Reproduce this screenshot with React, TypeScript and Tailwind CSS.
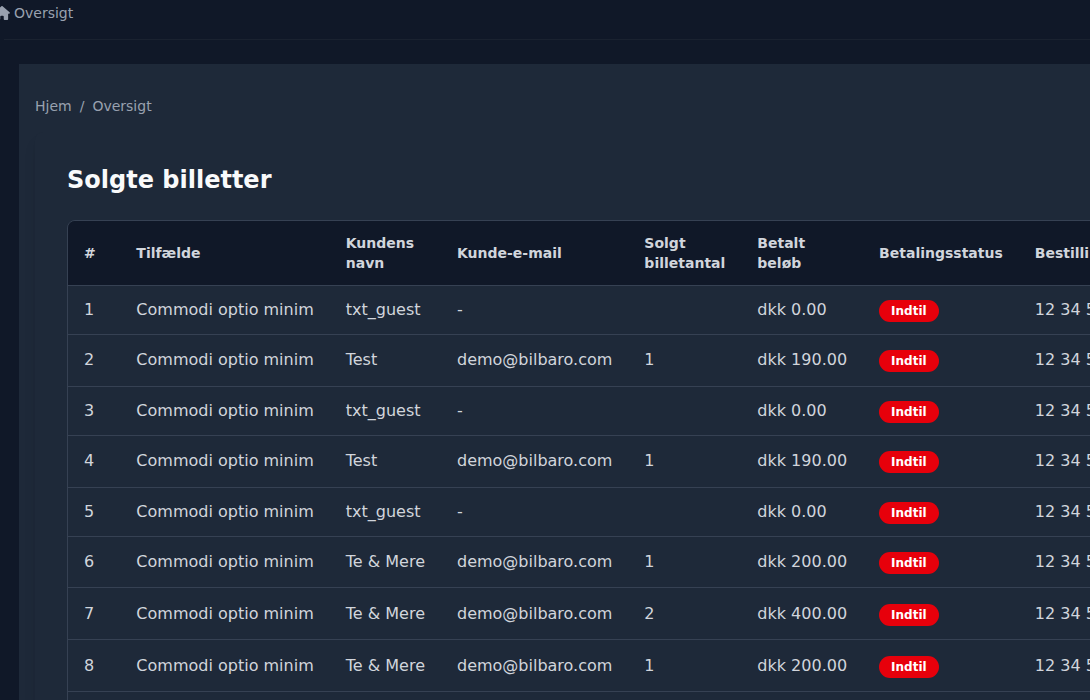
import { FaHouse } from "react-icons/fa6";

type Ticket = {
  id: number;
  event: string;
  name: string;
  email: string;
  sold: string;
  paid: string;
  order: string;
  rowClass: string;
};

const headers = [
  "#",
  "Tilfælde",
  "Kundens navn",
  "Kunde-e-mail",
  "Solgt billetantal",
  "Betalt beløb",
  "Betalingsstatus",
  "Bestillingsdato",
];

const event = "Commodi optio minim";
const email = "demo@bilbaro.com";
const order = "12 34 56 78";

const tickets: Ticket[] = [
  { id: 1, event, name: "txt_guest", email: "-", sold: "", paid: "dkk 0.00", order, rowClass: "h-[49px] *:pt-3" },
  { id: 2, event, name: "Test", email, sold: "1", paid: "dkk 190.00", order, rowClass: "h-[52px] *:pt-[13px]" },
  { id: 3, event, name: "txt_guest", email: "-", sold: "", paid: "dkk 0.00", order, rowClass: "h-[49px] *:pt-3" },
  { id: 4, event, name: "Test", email, sold: "1", paid: "dkk 190.00", order, rowClass: "h-[52px] *:pt-[13px]" },
  { id: 5, event, name: "txt_guest", email: "-", sold: "", paid: "dkk 0.00", order, rowClass: "h-[49px] *:pt-3" },
  { id: 6, event, name: "Te & Mere", email, sold: "1", paid: "dkk 200.00", order, rowClass: "h-[51px] *:pt-[13px]" },
  { id: 7, event, name: "Te & Mere", email, sold: "2", paid: "dkk 400.00", order, rowClass: "h-[52px] *:pt-3.5" },
  { id: 8, event, name: "Te & Mere", email, sold: "1", paid: "dkk 200.00", order, rowClass: "h-[52px] *:pt-3.5" },
  { id: 9, event, name: "Te & Mere", email, sold: "1", paid: "dkk 200.00", order, rowClass: "h-[52px] *:pt-3.5" },
];

function StatusBadge({ label }: { label: string }) {
  return (
    <span className="mt-0.5 block h-[22px] w-fit rounded-full bg-[#e7000b] px-3 text-xs leading-[22px] font-bold text-white">
      {label}
    </span>
  );
}

function TopBar() {
  return (
    <header className="ml-1 flex h-10 items-start border-b border-[#1a2230] text-sm text-gray-400">
      <div className="-ml-2.5 flex items-center gap-1 pt-[3px]">
        <FaHouse className="h-3.5 w-4 shrink-0" />
        <span>Oversigt</span>
      </div>
    </header>
  );
}

function TicketTable() {
  return (
    <div className="w-[1220px] overflow-hidden rounded-tl-lg border border-gray-700">
      {/* w-px keeps every column at its minimum content width */}
      <table className="w-px border-separate border-spacing-0 text-left text-gray-300">
        <thead className="bg-gray-900 text-sm">
          <tr className="h-[65px]">
            {headers.map((label) => (
              <th key={label} className="border-b border-gray-700 px-4 py-3 font-bold">
                {label}
              </th>
            ))}
          </tr>
        </thead>
        <tbody>
          {tickets.map((t) => (
            <tr key={t.id} className={`${t.rowClass} *:border-b *:border-gray-700 *:px-4 *:align-top *:whitespace-nowrap`}>
              <td className="min-w-[52.36px]">{t.id}</td>
              <td>{t.event}</td>
              <td>{t.name}</td>
              <td>{t.email}</td>
              <td>{t.sold}</td>
              <td>{t.paid}</td>
              <td>
                <StatusBadge label="Indtil" />
              </td>
              <td>{t.order}</td>
            </tr>
          ))}
        </tbody>
      </table>
    </div>
  );
}

export default function App() {
  return (
    <div className="h-screen overflow-hidden bg-gray-900 font-['DejaVu_Sans',sans-serif]">
      <TopBar />
      <main className="mt-6 ml-[19px] h-full bg-gray-800 pt-8 pl-4">
        <nav className="flex gap-2 text-sm text-gray-400">
          <span>Hjem</span>
          <span>/</span>
          <span>Oversigt</span>
        </nav>
        <section className="mt-4 h-full w-[1220px] rounded-lg bg-gray-800 px-8 pt-8 shadow-lg">
          <h1 className="mb-6 text-2xl font-bold text-gray-50">Solgte billetter</h1>
          <TicketTable />
        </section>
      </main>
    </div>
  );
}
